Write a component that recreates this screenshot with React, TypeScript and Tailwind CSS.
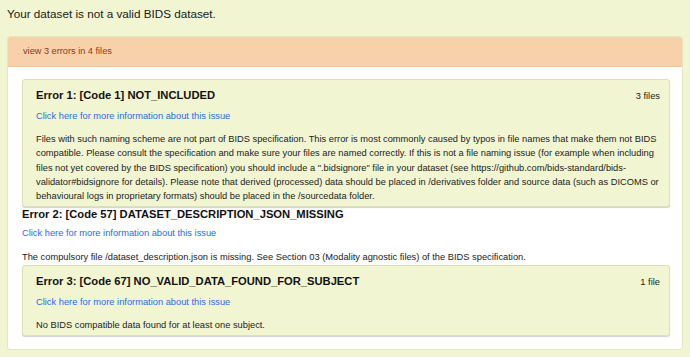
const issues = [
  {
    title: 'Error 1: [Code 1] NOT_INCLUDED',
    count: '3 files',
    boxed: true,
    text: 'Files with such naming scheme are not part of BIDS specification. This error is most commonly caused by typos in file names that make them not BIDS compatible. Please consult the specification and make sure your files are named correctly. If this is not a file naming issue (for example when including files not yet covered by the BIDS specification) you should include a ".bidsignore" file in your dataset (see https://github.com/bids-standard/bids-validator#bidsignore for details). Please note that derived (processed) data should be placed in /derivatives folder and source data (such as DICOMS or behavioural logs in proprietary formats) should be placed in the /sourcedata folder.',
  },
  {
    title: 'Error 2: [Code 57] DATASET_DESCRIPTION_JSON_MISSING',
    count: '',
    boxed: false,
    text: 'The compulsory file /dataset_description.json is missing. See Section 03 (Modality agnostic files) of the BIDS specification.',
  },
  {
    title: 'Error 3: [Code 67] NO_VALID_DATA_FOUND_FOR_SUBJECT',
    count: '1 file',
    boxed: true,
    text: 'No BIDS compatible data found for at least one subject.',
  },
];

const Issue = ({ issue }: { issue: (typeof issues)[number] }) => {
  const body = (
    <>
      <div className="flex items-baseline justify-between">
        <h4 className="text-[11.2px] font-bold leading-[14px] text-[#111]">{issue.title}</h4>
        {issue.count && <span className="text-[9.3px] text-[#222]">{issue.count}</span>}
      </div>
      <a href="#" className="mt-[5px] block text-[9.3px] leading-[14px] text-[#2d6be0]">
        Click here for more information about this issue
      </a>
      <p className={`text-[9.3px] leading-[14.3px] text-[#222] ${issue.boxed ? 'mt-[9px]' : 'mt-[10px]'}`}>
        {issue.text}
      </p>
    </>
  );

  if (!issue.boxed) {
    return <div>{body}</div>;
  }
  return (
    <div className="rounded-[3px] border border-[#dde1b6] bg-[#f1f5d2] pl-[13px] pr-[9px] pt-[8px] pb-[3px] shadow-[0_1px_1px_rgba(0,0,0,0.18)]">
      {body}
    </div>
  );
};

export default function App() {
  return (
    <div
      className="h-[357px] w-[690px] overflow-hidden bg-[#f1f5d2]"
      style={{ fontFamily: '"Liberation Sans", Arial, sans-serif' }}
    >
      <div className="flex h-[36px] items-center pl-[7px] pb-[9px] text-[11.7px] text-[#1a1a1a]">
        Your dataset is not a valid BIDS dataset.
      </div>
      <div className="ml-[7px] w-[676px] overflow-hidden rounded-[3px] border border-[#e4e8bf] bg-white">
        <div className="flex h-[30px] items-center border-b border-[#f3c497] bg-[#f8d1aa] px-[15px] text-[9.2px] text-[#8a3a1c]">
          view 3 errors in 4 files
        </div>
        <div className="flex flex-col pl-[14px] pr-[12px] pt-[12px] pb-[13px]">
          {issues.map((issue) => (
            <Issue key={issue.title} issue={issue} />
          ))}
        </div>
      </div>
    </div>
  );
}
